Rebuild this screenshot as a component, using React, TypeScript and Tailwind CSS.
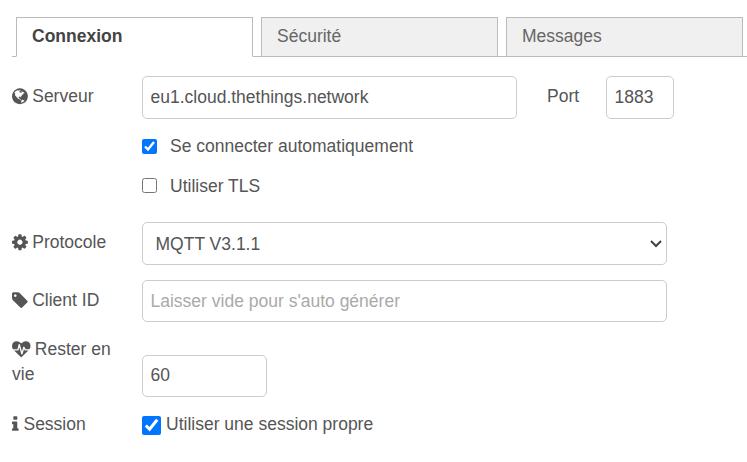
import React from "react";

const GLOBE =
  "M896 128q209 0 385.500 103t279.500 279.500 103 385.500-103 385.500-279.500 279.500-385.500 103-385.500-103-279.500-279.500-103-385.500 103-385.500 279.500-279.500 385.500-103zm274 521q-2 1-9.500 9.500t-13.500 9.500q2 0 4.500-5t5-11 3.500-7q6-7 22-15 14-6 52-12 34-8 51 11-2-2 9.500-13t14.500-12q3-2 15-4.500t15-7.500l2-22q-12 1-17.500-7t-6.500-21q0 2-6 8 0-7-4.500-8t-11.500 1-9 1q-10-3-15-7.500t-8-16.500-4-15q-2-5-9.500-11t-9.500-10q-1-2-2.500-5.500t-3-6.500-4-5.500-5.500-2.500-7 5-7.500 10-4.500 5q-3-2-6-1.500t-4.500 1-4.500 3-5 3.500q-3 2-8.500 3t-8.500 2q15-5-1-11-10-4-16-3 9-4 7.500-12t-8.500-14h5q-1-4-8.500-8.500t-17.500-8.500-13-6q-8-5-34-9.500t-33-.5q-5 6-4.500 10.500t4 14 3.500 12.500q1 6-5.500 13t-6.500 12q0 7 14 15.500t10 21.500q-3 8-16 16t-16 12q-5 8-1.500 18.500t10.500 16.500q2 2 1.500 4t-3.500 4.500-5.500 4-6.500 3.500l-3 2q-11 5-20.500-6t-13.500-26q-7-25-16-30-23-8-29 1-5-13-41-26-25-9-58-4 6-1 0-15-7-15-19-12 3-6 4-17.500t1-13.500q3-13 12-23 1-1 7-8.500t9.500-13.500.5-6q35 4 50-11 5-5 11.500-17t10.500-17q9-6 14-5.500t14.500 5.500 14.500 5q14 1 15.500-11t-7.500-20q12 1 3-17-4-7-8-9-12-4-27 5-8 4 2 8-1-1-9.500 10.500t-16.500 17.500-16-5q-1-1-5.500-13.500t-9.500-13.500q-8 0-16 15 3-8-11-15t-24-8q19-12-8-27-7-4-20.500-5t-19.500 4q-5 7-5.500 11.500t5 8 10.500 5.500 11.500 4 8.500 3q14 10 8 14-2 1-8.500 3.500t-11.500 4.500-6 4q-3 4 0 14t-2 14q-5-5-9-17.500t-7-16.500q7 9-25 6l-10-1q-4 0-16 2t-20.500 1-13.500-8q-4-8 0-20 1-4 4-2-4-3-11-9.500t-10-8.500q-46 15-94 41 6 1 12-1 5-2 13-6.500t10-5.500q34-14 42-7l5-5q14 16 20 25-7-4-30-1-20 6-22 12 7 12 5 18-4-3-11.500-10t-14.500-11-15-5q-16 0-22 1-146 80-235 222 7 7 12 8 4 1 5 9t2.500 11 11.500-3q9 8 3 19 1-1 44 27 19 17 21 21 3 11-10 18-1-2-9-9t-9-4q-3 5 .5 18.500t10.500 12.500q-7 0-9.500 16t-2.500 35.500-1 23.500l2 1q-3 12 5.500 34.500t21.500 19.500q-13 3 20 43 6 8 8 9 3 2 12 7.500t15 10 10 10.500q4 5 10 22.500t14 23.500q-2 6 9.500 20t10.500 23q-1 0-2.500 1t-2.500 1q3 7 15.500 14t15.500 13q1 3 2 10t3 11 8 2q2-20-24-62-15-25-17-29-3-5-5.500-15.500t-4.500-14.500q2 0 6 1.500t8.500 3.500 7.500 4 2 3q-3 7 2 17.500t12 18.500 17 19 12 13q6 6 14 19.500t0 13.500q9 0 20 10.500t17 19.500q5 8 8 26t5 24q2 7 8.500 13.500t12.500 9.500l16 8 13 7q5 2 18.500 10.500t21.500 11.500q10 4 16 4t14.500-2.500 13.500-3.500q15-2 29 15t21 21q36 19 55 11-2 1 .5 7.500t8 15.500 9 14.500 5.500 8.500q5 6 18 15t18 15q6-4 7-9-3 8 7 20t18 10q14-3 14-32-31 15-49-18 0-1-2.500-5.500t-4-8.500-2.500-8.500 0-7.500 5-3q9 0 10-3.500t-2-12.500-4-13q-1-8-11-20t-12-15q-5 9-16 8t-16-9q0 1-1.500 5.500t-1.500 6.500q-13 0-15-1 1-3 2.500-17.500t3.500-22.500q1-4 5.500-12t7.500-14.500 4-12.500-4.500-9.500-17.500-2.500q-19 1-26 20-1 3-3 10.500t-5 11.500-9 7q-7 3-24 2t-24-5q-13-8-22.500-29t-9.500-37q0-10 2.500-26.500t3-25-5.500-24.500q3-2 9-9.500t10-10.500q2-1 4.500-1.500t4.500 0 4-1.500 3-6q-1-1-4-3-3-3-4-3 7 3 28.500-1.500t27.500 1.500q15 11 22-2 0-1-2.500-9.500t-.5-13.500q5 27 29 9 3 3 15.500 5t17.500 5q3 2 7 5.500t5.500 4.500 5-.5 8.500-6.500q10 14 12 24 11 40 19 44 7 3 11 2t4.500-9.500 0-14-1.500-12.500l-1-8v-18l-1-8q-15-3-18.500-12t1.500-18.500 15-18.500q1-1 8-3.500t15.500-6.500 12.500-8q21-19 15-35 7 0 11-9-1 0-5-3t-7.500-5-4.500-2q9-5 2-16 5-3 7.500-11t7.500-10q9 12 21 2 7-8 1-16 5-7 20.500-10.500t18.500-9.500q7 2 8-2t1-12 3-12q4-5 15-9t13-5l17-11q3-4 0-4 18 2 31-11 10-11-6-20 3-6-3-9.500t-15-5.500q3-1 11.500-.5t10.500-1.500q15-10-7-16-17-5-43 12zm-163 877q206-36 351-189-3-3-12.500-4.500t-12.500-3.500q-18-7-24-8 1-7-2.500-13t-8-9-12.500-8-11-7q-2-2-7-6t-7-5.500-7.500-4.500-8.500-2-10 1l-3 1q-3 1-5.500 2.500t-5.500 3-4 3 0 2.500q-21-17-36-22-5-1-11-5.500t-10.500-7-10-1.500-11.500 7q-5 5-6 15t-2 13q-7-5 0-17.500t2-18.500q-3-6-10.500-4.500t-12 4.500-11.500 8.500-9 6.500-8.500 5.500-8.500 7.500q-3 4-6 12t-5 11q-2-4-11.500-6.500t-9.500-5.500q2 10 4 35t5 38q7 31-12 48-27 25-29 40-4 22 12 26 0 7-8 20.500t-7 21.500q0 6 2 16z";
const COG =
  "M1024 896q0-106-75-181t-181-75-181 75-75 181 75 181 181 75 181-75 75-181zm512-109v222q0 12-8 23t-20 13l-185 28q-19 54-39 91 35 50 107 138 10 12 10 25t-9 23q-27 37-99 108t-94 71q-12 0-26-9l-138-108q-44 23-91 38-16 136-29 186-7 28-36 28h-222q-14 0-24.500-8.500t-11.500-21.500l-28-184q-49-16-90-37l-141 107q-10 9-25 9-14 0-25-11-126-114-165-168-7-10-7-23 0-12 8-23 15-21 51-66.500t54-70.500q-27-50-41-99l-183-27q-13-2-21-12.500t-8-23.500v-222q0-12 8-23t19-13l186-28q14-46 39-92-40-57-107-138-10-12-10-24 0-10 9-23 26-36 98.500-107.500t94.500-71.500q13 0 26 10l138 107q44-23 91-38 16-136 29-186 7-28 36-28h222q14 0 24.500 8.500t11.500 21.500l28 184q49 16 90 37l142-107q9-9 24-9 13 0 25 10 129 119 165 170 7 8 7 22 0 12-8 23-15 21-51 66.500t-54 70.500q26 50 41 98l183 28q13 2 21 12.500t8 23.500z";
const TAG =
  "M576 448q0-53-37.500-90.500t-90.500-37.500-90.500 37.500-37.500 90.500 37.500 90.500 90.500 37.500 90.500-37.500 37.500-90.500zm1067 576q0 53-37 90l-491 492q-39 37-91 37-53 0-90-37l-715-716q-38-37-64.500-101t-26.500-117v-416q0-52 38-90t90-38h416q53 0 117 26.500t102 64.500l715 714q37 39 37 91z";
const HEARTBEAT =
  "M1280 1024h305q-5 6-10 10.500t-9 7.500l-3 4-623 600q-18 18-44 18t-44-18l-624-602q-5-2-21-20h369q22 0 39.500-13.500t22.500-34.500l70-281 190 667q6 20 23 33t39 13q21 0 38-13t23-33l146-485 56 112q18 35 57 35zm512-428q0 145-103 300h-369l-111-221q-8-17-25.500-27t-36.500-8q-45 5-56 46l-129 430-196-686q-6-20-23.500-33t-39.500-13-39 13.500-22 34.500l-116 464h-423q-103-155-103-300 0-220 127-344t351-124q62 0 126.500 21.500t120 58 95.500 68.500 76 68q36-36 76-68t95.500-68.500 120-58 126.500-21.500q224 0 351 124t127 344z";
const INFO =
  "M1216 1344v128q0 26-19 45t-45 19h-512q-26 0-45-19t-19-45v-128q0-26 19-45t45-19h64v-384h-64q-26 0-45-19t-19-45v-128q0-26 19-45t45-19h384q26 0 45 19t19 45v576h64q26 0 45 19t19 45zm-128-1152v192q0 26-19 45t-45 19h-256q-26 0-45-19t-19-45v-192q0-26 19-45t45-19h256q26 0 45 19t19 45z";

type IconProps = { d: string; viewBox: string; className: string };

function Icon({ d, viewBox, className }: IconProps) {
  return (
    <svg viewBox={viewBox} fill="currentColor" className={`inline-block h-[18.5px] align-[-3px] ${className}`}>
      <path d={d} />
    </svg>
  );
}

function Tab({ label, active = false }: { label: string; active?: boolean }) {
  return (
    <div
      className={`h-10 w-[237px] border border-[#bbb] pl-[15px] leading-[37px] ${
        active ? "border-b-white bg-white font-bold text-[#444]" : "bg-[#f0f0f0] text-[#666]"
      }`}
    >
      {label}
    </div>
  );
}

const field = "block rounded-[5px] border border-[#ccc] bg-white px-[7.5px] text-[#555] outline-none placeholder:text-[#aaa]";

export default function App() {
  return (
    <div className="h-[462px] w-[747px] overflow-hidden bg-white pl-3 pt-[17px] font-['Liberation_Sans',Arial,sans-serif] text-[17.5px] leading-[25px] text-[#555]">
      <div className="flex h-10 items-stretch">
        <div className="w-1 border-b border-[#bbb]" />
        <Tab label="Connexion" active />
        <div className="w-2 border-b border-[#bbb]" />
        <Tab label="Sécurité" />
        <div className="w-2 border-b border-[#bbb]" />
        <Tab label="Messages" />
        <div className="flex-1 border-b border-[#bbb]" />
      </div>

      <div className="mt-[19px] flex h-[43px] items-start">
        <label className="w-[130px] shrink-0 pt-2">
          <Icon d={GLOBE} viewBox="128 0 1536 1792" className="w-[15.85px] -mr-[0.5px]" /> Serveur
        </label>
        <input className={`${field} h-[43px] w-[375px]`} defaultValue="eu1.cloud.thethings.network" />
        <label className="ml-[30px] w-[59px] pt-2">Port</label>
        <input className={`${field} h-[43px] w-[68px]`} defaultValue="1883" />
      </div>

      <label className="ml-[130px] mt-[15px] flex h-[25px] items-center">
        <input type="checkbox" defaultChecked className="mr-[13px] size-[15px]" />
        Se connecter automatiquement
      </label>
      <label className="ml-[130px] mt-[15px] flex h-[25px] items-center">
        <input type="checkbox" className="-mt-[2px] mr-[13px] size-[15px]" />
        Utiliser TLS
      </label>

      <div className="mt-[23px] flex h-[43px]">
        <label className="w-[130px] pt-2">
          <Icon d={COG} viewBox="0 0 1536 1792" className="w-[15.85px] -mr-[0.5px]" /> Protocole
        </label>
        <div className="relative w-[525px]">
          <select className="block h-[43px] w-full appearance-none rounded-[5px] border border-[#ccc] bg-white pl-[12.5px] pt-[2px] text-[#555]">
            <option>MQTT V3.1.1</option>
          </select>
          <svg
            viewBox="0 0 12 8"
            fill="none"
            stroke="#444"
            strokeWidth="2"
            className="pointer-events-none absolute right-[5px] top-[18px] h-2 w-3"
          >
            <path d="M1 1l5 5 5-5" />
          </svg>
        </div>
      </div>

      <div className="mt-[15px] flex h-[42px]">
        <label className="w-[130px] pt-2">
          <Icon d={TAG} viewBox="128 0 1536 1792" className="w-[15.85px] -mr-[0.5px]" /> Client ID
        </label>
        <input className={`${field} h-[42px] w-[525px]`} placeholder="Laisser vide pour s'auto générer" />
      </div>

      <div className="mt-[15px] flex h-[60px] items-end">
        <label className="h-[60px] w-[130px] pr-5">
          <Icon d={HEARTBEAT} viewBox="0 0 1792 1792" className="w-[18.5px] -mr-[0.5px]" /> Rester en vie
        </label>
        <input className={`${field} h-[42px] w-[125px] pb-[2px]`} defaultValue="60" />
      </div>

      <div className="mt-[15px] flex h-[25px]">
        <label className="w-[130px]">
          <Icon d={INFO} viewBox="576 0 640 1792" className="w-[6.6px]" /> Session
        </label>
        <label className="flex">
          <input type="checkbox" defaultChecked className="mr-[5px] mt-1 size-[19px]" />
          Utiliser une session propre
        </label>
      </div>
    </div>
  );
}
